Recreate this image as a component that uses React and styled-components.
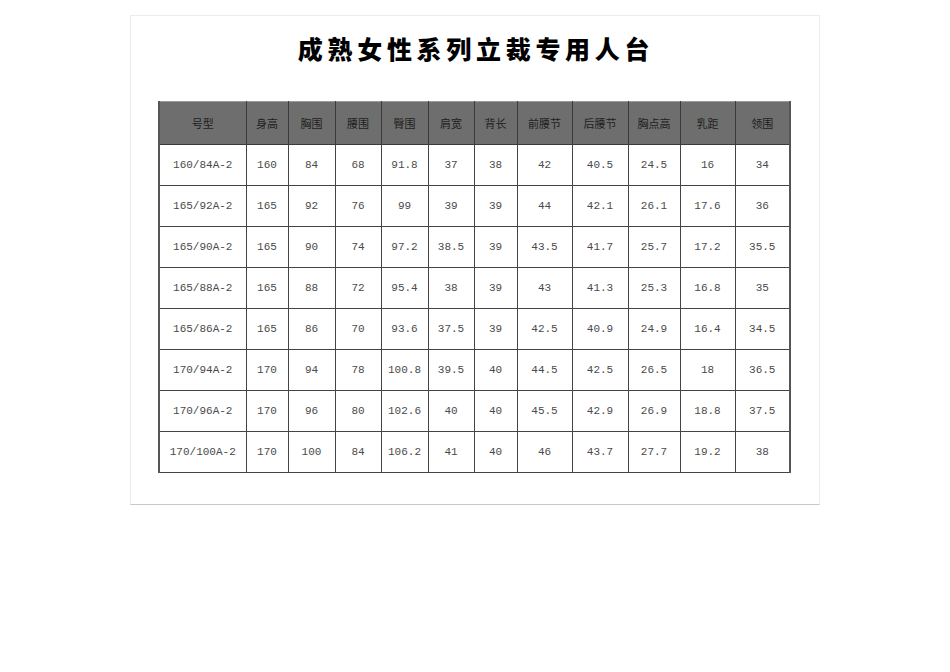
import React from 'react'
import styled, { createGlobalStyle } from 'styled-components'

const GlobalStyle = createGlobalStyle`
  html, body {
    margin: 0;
    padding: 0;
    background: #ffffff;
  }
  body {
    font-family: "Noto Sans CJK SC", "Liberation Sans", sans-serif;
  }
`

const Page = styled.div`
  width: 950px;
  height: 672px;
  padding-top: 15px;
  box-sizing: border-box;
`

const Sheet = styled.div`
  width: 690px;
  height: 490px;
  margin-left: 130px;
  box-sizing: border-box;
  border: 1px solid #ececec;
  border-bottom: 1px solid #c8c8c8;
  background: #fff;
  padding-top: 17px;
`

const Title = styled.h1`
  margin: 0;
  text-align: center;
  font-family: "Noto Sans CJK SC", sans-serif;
  font-weight: 900;
  font-size: 25px;
  line-height: 30px;
  letter-spacing: 4.7px;
  color: #000;
  padding-left: 2px;
`

const Table = styled.table`
  margin: 38px 0 0 27px;
  border-collapse: collapse;
  table-layout: fixed;
  width: 633px;
  border-left: 2px solid #555;
  border-right: 2px solid #555;
`

const HeadCell = styled.th`
  height: 42px;
  padding: 0;
  background: #6e6e6e;
  border: 1px solid #3a3a3a;
  border-top: 1px solid #9a9a9a;
  font-family: "Noto Sans CJK SC", sans-serif;
  font-weight: 400;
  font-size: 11px;
  color: #1e1e1e;
  text-align: center;
`

const Cell = styled.td`
  height: 40px;
  padding: 0;
  border: 1px solid #444;
  font-family: "Liberation Mono", monospace;
  font-size: 11px;
  color: #4a4a4a;
  text-align: center;
`

const widths = [87, 42, 47, 46, 47, 46, 43, 55, 56, 52, 55, 55]
const heads = ['号型', '身高', '胸围', '腰围', '臀围', '肩宽', '背长', '前腰节', '后腰节', '胸点高', '乳距', '领围']

const rows = [
  ['160/84A-2', '160', '84', '68', '91.8', '37', '38', '42', '40.5', '24.5', '16', '34'],
  ['165/92A-2', '165', '92', '76', '99', '39', '39', '44', '42.1', '26.1', '17.6', '36'],
  ['165/90A-2', '165', '90', '74', '97.2', '38.5', '39', '43.5', '41.7', '25.7', '17.2', '35.5'],
  ['165/88A-2', '165', '88', '72', '95.4', '38', '39', '43', '41.3', '25.3', '16.8', '35'],
  ['165/86A-2', '165', '86', '70', '93.6', '37.5', '39', '42.5', '40.9', '24.9', '16.4', '34.5'],
  ['170/94A-2', '170', '94', '78', '100.8', '39.5', '40', '44.5', '42.5', '26.5', '18', '36.5'],
  ['170/96A-2', '170', '96', '80', '102.6', '40', '40', '45.5', '42.9', '26.9', '18.8', '37.5'],
  ['170/100A-2', '170', '100', '84', '106.2', '41', '40', '46', '43.7', '27.7', '19.2', '38'],
]

const App = () => {
  return (
    <Page>
      <GlobalStyle />
      <Sheet>
        <Title>成熟女性系列立裁专用人台</Title>
        <Table>
          <colgroup>
            {widths.map((w, i) => (
              <col key={i} style={{ width: w }} />
            ))}
          </colgroup>
          <thead>
            <tr>
              {heads.map((h) => (
                <HeadCell key={h}>{h}</HeadCell>
              ))}
            </tr>
          </thead>
          <tbody>
            {rows.map((r) => (
              <tr key={r[0]}>
                {r.map((v, i) => (
                  <Cell key={i}>{v}</Cell>
                ))}
              </tr>
            ))}
          </tbody>
        </Table>
      </Sheet>
    </Page>
  )
}

export default App
